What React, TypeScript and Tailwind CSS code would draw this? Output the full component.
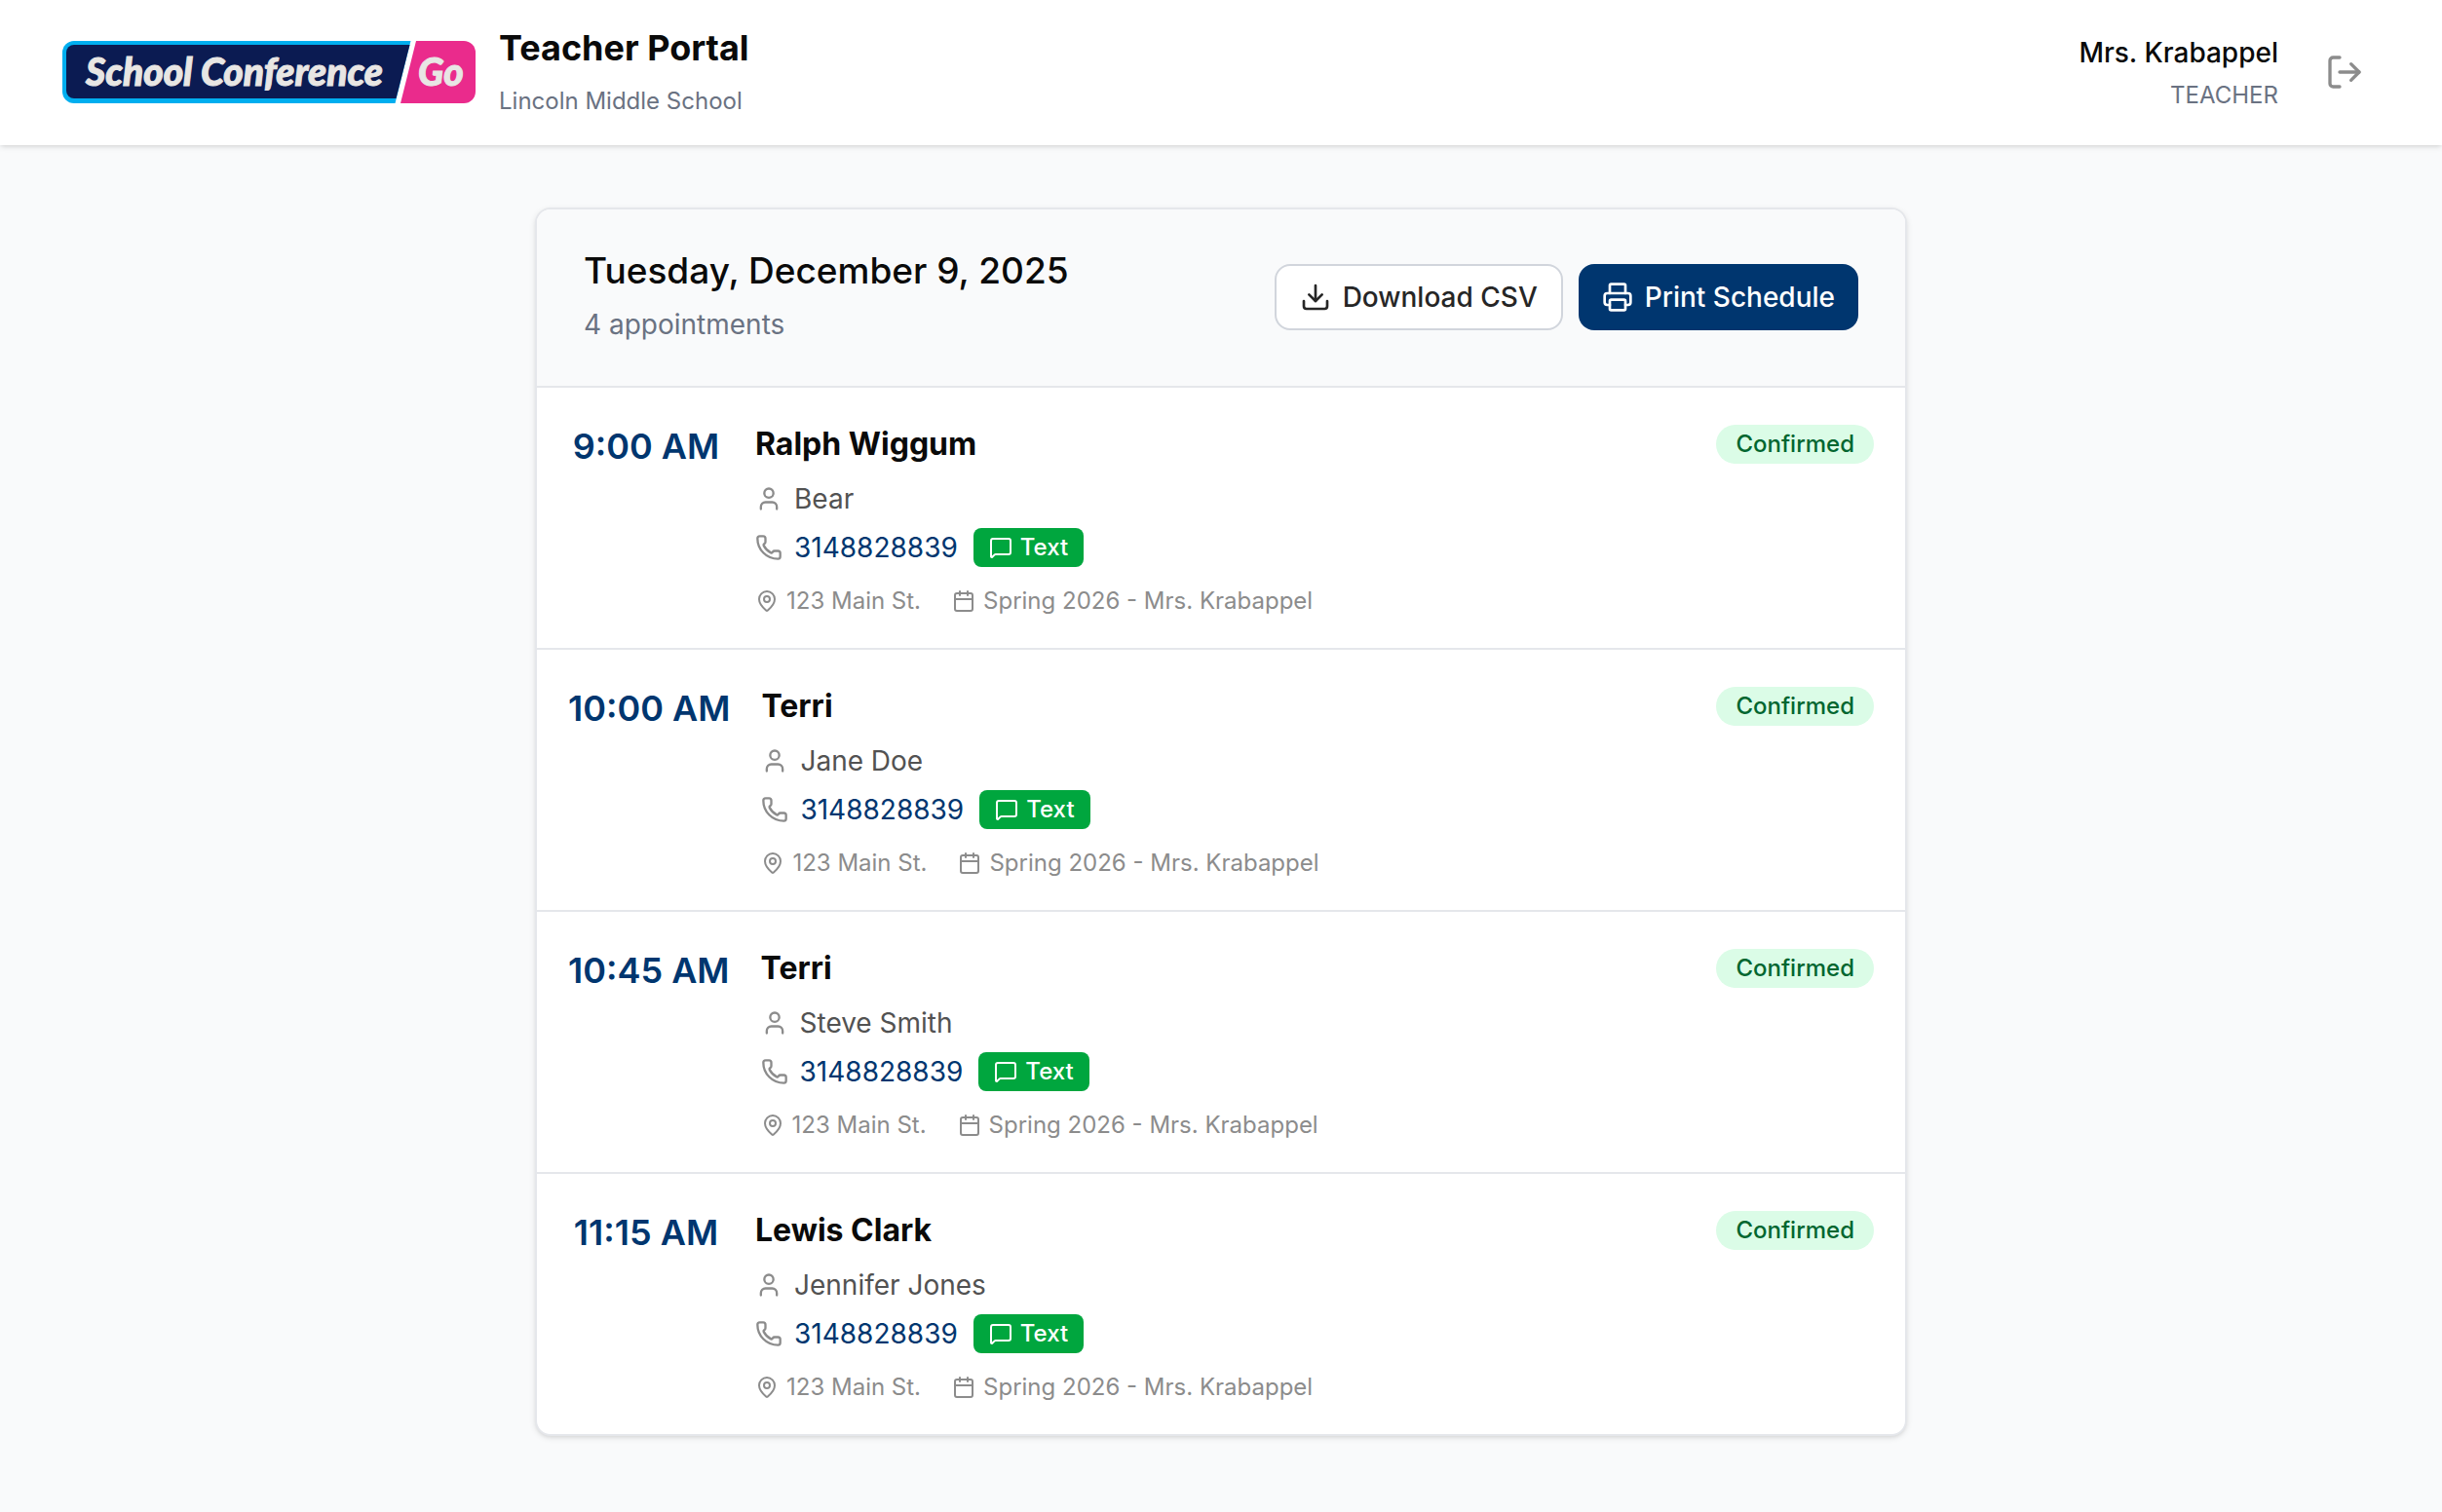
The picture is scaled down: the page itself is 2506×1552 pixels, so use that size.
import { Calendar, Download, LogOut, MapPin, MessageSquare, Phone, Printer, User } from 'lucide-react';

const appointments = [
  { id: 1, time: '9:00 AM', parent: 'Ralph Wiggum', student: 'Bear', phone: '3148828839' },
  { id: 2, time: '10:00 AM', parent: 'Terri', student: 'Jane Doe', phone: '3148828839' },
  { id: 3, time: '10:45 AM', parent: 'Terri', student: 'Steve Smith', phone: '3148828839' },
  { id: 4, time: '11:15 AM', parent: 'Lewis Clark', student: 'Jennifer Jones', phone: '3148828839' },
];

function Logo() {
  return (
    <svg className="h-16 w-[424px] shrink-0" viewBox="0 0 424 64" role="img" aria-label="School Conference Go">
      <path d="M12 0H357.500L341.500 64H12A12 12 0 0 1 0 52V12A12 12 0 0 1 12 0Z" fill="#00aeef" />
      <path d="M12 4H356.500L342.500 59H12A8 8 0 0 1 4 51V12A8 8 0 0 1 12 4Z" fill="#0b1b52" />
      <path d="M363 0H412A12 12 0 0 1 424 12V52A12 12 0 0 1 412 64H347Z" fill="#ea2b8c" />
      <g
        fill="#e8e6e4"
        stroke="#e8e6e4"
        strokeWidth="1"
        fontFamily="Lato, sans-serif"
        fontStyle="italic"
        fontWeight="900"
        fontSize="39"
      >
        <text x="24" y="46">School Conference</text>
        <text x="365" y="46">Go</text>
      </g>
    </svg>
  );
}

export default function App() {
  return (
    <div className="min-h-screen bg-gray-50 font-['Inter',sans-serif] text-neutral-950">
      <header className="flex items-center justify-between bg-white px-16 pt-6 pb-[25px] shadow-[0_2px_6px_rgba(0,0,0,0.1),0_2px_4px_-2px_rgba(0,0,0,0.1)]">
        <div className="flex items-center gap-6">
          <Logo />
          <div>
            <h1 className="text-4xl leading-[50px] font-bold">Teacher Portal</h1>
            <p className="mt-[10px] text-2xl leading-10 text-gray-500">Lincoln Middle School</p>
          </div>
        </div>
        <div className="flex items-center gap-8">
          <div className="text-right">
            <p className="text-[28px] leading-10 font-medium">Mrs. Krabappel</p>
            <p className="mt-2 text-2xl text-gray-500">TEACHER</p>
          </div>
          <button type="button" aria-label="Log out" className="rounded-2xl p-4 text-[#8c8c8c]">
            <LogOut className="size-10" />
          </button>
        </div>
      </header>

      <main className="mx-auto max-w-[1536px] px-16 py-16">
        <section className="overflow-hidden rounded-2xl border-2 border-gray-200 bg-white shadow-[0_2px_6px_rgba(0,0,0,0.1),0_2px_4px_-2px_rgba(0,0,0,0.1)]">
          <div className="flex items-center justify-between border-b-2 border-gray-200 bg-gray-50 px-12 pt-[38px] pb-[39px]">
            <div className="pb-1">
              <h2 className="text-[37px] leading-[50px] font-medium">Tuesday, December 9, 2025</h2>
              <p className="mt-[10px] text-[28px] leading-10 text-gray-500">4 appointments</p>
            </div>
            <div className="flex gap-4 text-[28px] leading-10 font-medium">
              <button type="button" className="flex items-center gap-3 rounded-2xl border-2 border-gray-300 bg-white px-6 py-3 text-neutral-800">
                <Download className="size-8" />
                Download CSV
              </button>
              <button type="button" className="flex items-center gap-3 rounded-2xl bg-[#00366f] px-6 py-3 text-white">
                <Printer className="size-8" />
                Print Schedule
              </button>
            </div>
          </div>

          <ul className="divide-y-2 divide-gray-200">
            {appointments.map((appt) => (
              <li key={appt.id} className="flex gap-8 p-8">
                <p className="min-w-40 text-center text-4xl leading-[56px] font-semibold text-[#00366f]">{appt.time}</p>
                <div className="flex-1">
                  <div className="flex items-center justify-between">
                    <h3 className="text-[32px] leading-[52px] font-bold">{appt.parent}</h3>
                    <span className="rounded-full bg-green-100 px-5 py-1 text-2xl font-medium text-green-800">Confirmed</span>
                  </div>
                  <p className="mt-[10px] flex items-center gap-3 text-[28px] leading-10 text-neutral-600">
                    <User className="size-7 text-[#8c8c8c]" />
                    {appt.student}
                  </p>
                  <div className="mt-[10px] flex items-center text-[28px] leading-10">
                    <Phone className="mr-3 size-7 text-[#8c8c8c]" />
                    <a href={`tel:${appt.phone}`} className="text-[#00366f]">{appt.phone}</a>
                    <a
                      href={`sms:${appt.phone}`}
                      className="ml-4 flex items-center gap-2 rounded-lg bg-green-600 px-4 py-1 text-2xl font-medium text-white"
                    >
                      <MessageSquare className="size-6" />
                      Text
                    </a>
                  </div>
                  <div className="mt-[18px] flex items-center gap-8 text-2xl leading-[33px] text-[#8c8c8c]">
                    <span className="flex items-center gap-2">
                      <MapPin className="size-6" />
                      123 Main St.
                    </span>
                    <span className="flex items-center gap-2">
                      <Calendar className="size-6" />
                      Spring 2026 - Mrs. Krabappel
                    </span>
                  </div>
                </div>
              </li>
            ))}
          </ul>
        </section>
      </main>
    </div>
  );
}
